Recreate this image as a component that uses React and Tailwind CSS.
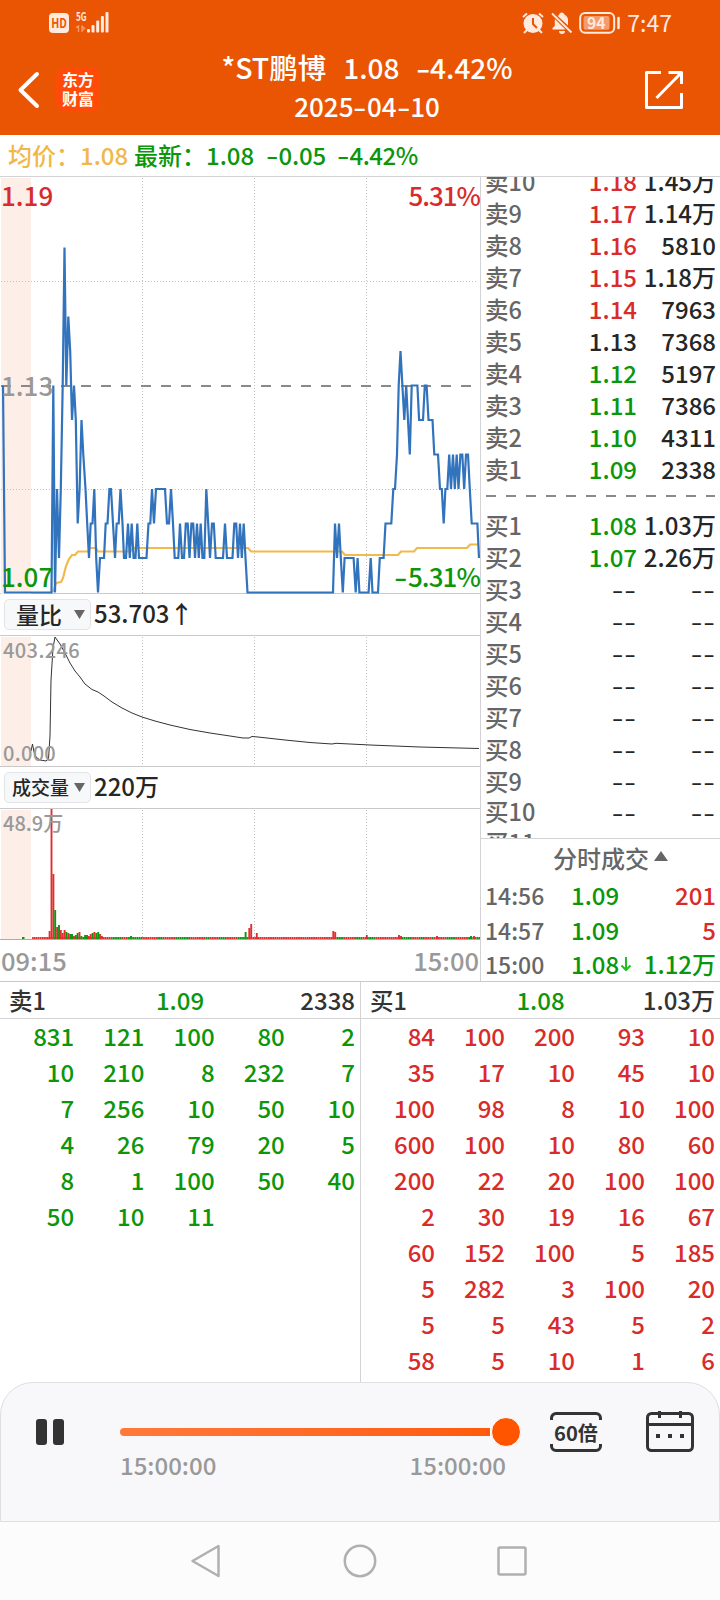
import React from 'react'
import clsx from 'clsx'

const asks = [
  ['卖10', '1.18', '1.45万', 'up'],
  ['卖9', '1.17', '1.14万', 'up'],
  ['卖8', '1.16', '5810', 'up'],
  ['卖7', '1.15', '1.18万', 'up'],
  ['卖6', '1.14', '7963', 'up'],
  ['卖5', '1.13', '7368', 'flat'],
  ['卖4', '1.12', '5197', 'down'],
  ['卖3', '1.11', '7386', 'down'],
  ['卖2', '1.10', '4311', 'down'],
  ['卖1', '1.09', '2338', 'down'],
]

const bids = [
  ['买1', '1.08', '1.03万', 'down'],
  ['买2', '1.07', '2.26万', 'down'],
  ['买3', '--', '--', 'flat'],
  ['买4', '--', '--', 'flat'],
  ['买5', '--', '--', 'flat'],
  ['买6', '--', '--', 'flat'],
  ['买7', '--', '--', 'flat'],
  ['买8', '--', '--', 'flat'],
  ['买9', '--', '--', 'flat'],
]

const sellQueue = [
  831, 121, 100, 80, 2,
  10, 210, 8, 232, 7,
  7, 256, 10, 50, 10,
  4, 26, 79, 20, 5,
  8, 1, 100, 50, 40,
  50, 10, 11,
]

const buyQueue = [
  84, 100, 200, 93, 10,
  35, 17, 10, 45, 10,
  100, 98, 8, 10, 100,
  600, 100, 10, 80, 60,
  200, 22, 20, 100, 100,
  2, 30, 19, 16, 67,
  60, 152, 100, 5, 185,
  5, 282, 3, 100, 20,
  5, 5, 43, 5, 2,
  58, 5, 10, 1, 6,
]

// [x, price in cents]
const price = [
  [3, 113], [5, 107], [51.5, 107], [53.3, 113], [55, 107], [57, 110], [59, 108], [60.8, 110], [62.7, 113], [64.5, 117],
  [66.3, 113], [68.3, 115], [70.2, 114], [72, 112], [74, 113], [75.8, 112], [77.7, 109], [79.6, 110], [81.5, 112],
  [83.3, 111], [85.5, 110], [87.2, 109], [89, 108], [90.7, 109], [92.5, 109], [94.3, 110], [96.2, 108], [98, 107],
  [100, 108], [104, 108], [105.7, 109], [107.5, 109], [109.4, 110], [111, 110], [113, 109], [115, 108], [116.7, 109],
  [118.7, 109], [120.5, 110], [122.5, 109], [124, 108], [126, 108], [128, 109], [129.8, 108], [131.7, 109], [133.6, 108],
  [135.5, 108], [137.3, 109], [139, 108], [146.5, 108], [148.5, 109], [150.3, 109], [152, 110], [154, 109], [156, 110],
  [165, 110], [167, 109], [169, 109], [171, 110], [173, 109], [174.7, 108], [178.3, 108], [180, 109], [182, 108],
  [184, 108], [185.8, 109], [187.7, 109], [189.5, 108], [191.4, 109], [193.2, 109], [195, 108], [197, 109], [198.8, 108],
  [200.7, 109], [202.5, 108], [204.3, 108], [206.3, 110], [208.2, 109], [210, 108], [212, 109], [213.8, 109], [215.7, 108],
  [223, 108], [225, 109], [227, 108], [232.5, 108], [234.3, 109], [236.2, 109], [238, 108], [240, 109], [241.8, 108],
  [243.7, 109], [245.5, 108], [247.5, 107], [333, 107], [335, 109], [337, 108], [339, 109], [340.8, 108], [342.8, 107],
  [344.6, 108], [353.6, 108], [355.7, 107], [357.6, 108], [359.4, 107], [368.6, 107], [370.7, 108], [372.5, 107],
  [378, 107], [379.8, 108], [383.6, 108], [385.5, 109], [391.3, 109], [393.3, 110], [395, 110], [397, 111], [398.7, 113],
  [400.5, 114], [402.4, 113], [404.3, 112], [406.2, 113], [408, 112], [409.8, 111], [411.7, 113], [417.4, 113],
  [419.1, 112], [423, 112], [424.8, 113], [426.6, 113], [428.5, 112], [432.5, 112], [434.3, 111], [438, 111], [440, 110],
  [441.8, 110], [443.7, 109], [445.4, 110], [447.3, 110], [449.2, 111], [451, 110], [453, 111], [454.8, 110],
  [456.7, 111], [458.5, 110], [460.4, 111], [462.3, 111], [464.2, 110], [466, 111], [468, 111], [469.8, 110],
  [471.7, 109], [477.4, 109], [479, 108],
]

const average = '53,415 56,406 61,405 63,401 66,389 69,382 72,378 75,378 78,374.5 88,374.5 90,371 96,371 98,374.5 130,374.5 134,371 248,371 251,374.5 342,374.5 345,378 398,378 401,374.5 414,374.5 417,371 467,371 470,367.5 478,367.5'

const ratio = '31,115 32.5,108 34,116 36,121 40,124 46,125 48.5,123 50,100 51,44 53,12 55,1 60,8 65,17 70,27 75,35 80,41 85,48 92,53.5 98,56 104,60 112,66 122,72 132,77 142,81 155,85 170,89 190,93.5 210,97 230,100 243,102 249,102 252,100.5 258,101 285,104 310,106.5 332,108 336,107.3 370,109 420,111 479,112.5'

// [x, height, rising]
const spikes = [
  [49.6, 8, 1], [51.5, 130, 1], [53.4, 65, 1], [55.2, 29, 0], [57.1, 12, 1], [59, 14, 0], [60.8, 9, 1], [62.7, 6, 1],
  [64.6, 9, 1], [66.4, 7, 0], [68.3, 6, 1], [70.2, 5, 0], [72, 5, 0], [73.9, 3, 1], [75.8, 4, 0], [77.6, 6, 0],
  [79.5, 7, 1], [81.4, 3, 0], [85.1, 4, 0], [87, 4, 0], [88.8, 3, 1], [90.7, 5, 1], [92.6, 6, 0], [94.4, 7, 1],
  [96.3, 6, 0], [98.2, 7, 0], [100, 5, 1], [101.9, 3, 1], [131, 3, 0], [245.6, 7, 0], [249.3, 11, 1], [251.2, 15, 1],
  [256.8, 6, 1], [333.3, 8, 1], [335.2, 7, 1], [366.8, 4, 1], [399, 4, 1], [401, 3, 1], [437, 3, 1], [471, 3, 0], [474, 3, 1],
]

// stretches of thin trading where the bars are mostly green
const greenRuns = [[83, 90], [112, 121], [128, 142], [158, 162], [175, 189], [205, 209], [218, 226], [238, 246], [337, 344], [355, 362], [369, 375], [402, 412], [420, 424], [431, 434], [447, 456], [468, 472], [477, 480]]

const tone = {
  up: 'text-[#d92b2b]',
  down: 'text-[#0b960b]',
  flat: 'text-[#262626]',
}

// hyphen drawn wide, like a minus sign
function Minus() {
  return (
    <span className="inline-block w-[0.52em] text-left">
      <span className="inline-block origin-left scale-x-[1.45]">-</span>
    </span>
  )
}

function Empty() {
  return <span className="inline-block origin-right scale-x-[1.4] font-normal tracking-[0.6px]">--</span>
}

function StatusBar() {
  return (
    <div className="flex h-[46px] items-center justify-between pl-[49px] pr-[48px] text-[#ffeae0]">
      <svg className="overflow-visible" width="62" height="24" viewBox="0 0 62 24" fill="currentColor">
        <rect x="0" y="2" width="20" height="20" rx="4" />
        <text x="2.2" y="17" fontSize="13" fontWeight="700" textLength="15.6" lengthAdjust="spacingAndGlyphs" fill="#ea5504">HD</text>
        <text x="27" y="9.5" fontSize="11.500" fontWeight="700" textLength="10.5" lengthAdjust="spacingAndGlyphs">5G</text>
        <path d="M27 16.500l2.500-1.500v6M33 14.500v6.500M33 15l2.500 2.500-2.500 2" fill="none" stroke="currentColor" strokeWidth="1.400" opacity="0.450" />
        <rect x="38" y="18" width="3" height="3.500" rx="1" />
        <rect x="42.500" y="14" width="3" height="7.500" rx="1" />
        <rect x="47.200" y="9.500" width="3" height="12" rx="1" />
        <rect x="51.900" y="5" width="3" height="16.500" rx="1" />
        <rect x="56.500" y="1" width="3" height="20.500" rx="1" />
      </svg>
      <div className="flex items-center">
        <svg width="22" height="22" viewBox="0 0 22 22" fill="none" stroke="currentColor" strokeWidth="2">
          <circle cx="11" cy="11.500" r="9.500" fill="currentColor" stroke="none" />
          <path d="M1 5l4-3.500M21 5l-4-3.500M2 21l3-3M20 21l-3-3" />
          <path d="M11 6v6l4 4" stroke="#ea5504" />
        </svg>
        <svg className="ml-[7px]" width="22" height="22" viewBox="0 0 22 22" fill="currentColor">
          <path d="M8 3.200A3 3 0 0 1 11 .5a3 3 0 0 1 2.600 2.200A6 6 0 0 1 17 8v5.500L6.500 3.800z" />
          <path d="M3.800 7L14.500 17.500H1.500V16l2.300-2zM8 19h6a3 3 0 0 1-6 0z" />
          <path d="M1 1.500L20.500 20.500" stroke="currentColor" strokeWidth="1.800" />
        </svg>
        <svg className="ml-[6px]" width="42" height="24" viewBox="0 0 42 24" fill="none" stroke="currentColor">
          <rect x="1.200" y="2" width="34" height="19.800" rx="5" strokeWidth="2" />
          <rect x="4.500" y="5" width="26" height="13.800" rx="2" fill="#f59b6b" stroke="none" />
          <path d="M39.500 7v10" strokeWidth="2.500" strokeLinecap="round" />
          <text x="8" y="17.500" fontSize="16" fontWeight="700" textLength="18.500" lengthAdjust="spacingAndGlyphs" fill="currentColor" stroke="none">94</text>
        </svg>
        <span className="ml-[6px] text-[23px] font-normal leading-6 -mt-[2px]">7:47</span>
      </div>
    </div>
  )
}

function Header() {
  return (
    <header className="h-[135px] bg-[#ea5504] text-white">
      <StatusBar />
      <div className="flex h-[89px] pl-[17px]">
        <svg className="mt-[25px]" width="24" height="38" viewBox="0 0 24 38" fill="none" stroke="currentColor" strokeWidth="4" strokeLinecap="round" strokeLinejoin="round">
          <path d="M20 3L3.500 19 20 35" />
        </svg>
        <div className="ml-[15px] mt-[21px] flex h-[45px] w-[44px] flex-col items-center justify-center rounded-[10px] bg-[#ff4a08] text-[16px] font-bold leading-[19px]">
          <span className="-mt-[2px]">东方</span>
          <span>财富</span>
        </div>
        <div className="ml-[67px] flex w-[400px] flex-col items-center">
          <div className="mt-[1px] flex text-[28px] leading-[40px]">
            <span className="text-[28.500px]">*ST鹏博</span>
            <span className="ml-[17px]">1.08</span>
            <span className="ml-[16px]"><Minus />4.42%</span>
          </div>
          <div className="mt-[1px] text-[26px] leading-[36px]">2025<Minus />04<Minus />10</div>
        </div>
        <svg className="ml-[77px] mt-[24px]" width="40" height="40" viewBox="0 0 40 40" fill="none" stroke="currentColor" strokeWidth="3" strokeLinejoin="round">
          <path d="M17 2.500H2.500v35h35V23M24.500 2.500h13V14M12.500 28L37 3" />
        </svg>
      </div>
    </header>
  )
}

function Summary() {
  return (
    <div className="flex h-[42px] border-b border-[#d3d3d6] pl-[8px] text-[24px] leading-[39px] text-[#0b960b]">
      <span className="w-[72px] text-[#f0b84a]">均价：</span>
      <span className="w-[54px] text-[#f0b84a]">1.08</span>
      <span className="w-[72px]">最新：</span>
      <span className="w-[60px]">1.08</span>
      <span className="w-[71px] tracking-[-0.2px]"><Minus />0.05</span>
      <span className="tracking-[-0.5px]"><Minus />4.42%</span>
    </div>
  )
}

function Grid({ height }) {
  return (
    <g>
      <rect x="1" y="1" width="30" height={height - 1} fill="#fdeee8" />
      <path d={`M142.5 1V${height}M254.5 1V${height}M366.5 1V${height}`} stroke="#c2c2c2" strokeDasharray="1 2" />
    </g>
  )
}

function PriceChart() {
  const line = price.map(([x, p]) => `${x},${208.5 + (113 - p) * 34.5}`).join(' ')
  return (
    <div className="relative h-[417px] border-b border-[#c9c9c9] text-[26px] leading-[30px]">
      <svg width="480" height="417" viewBox="0 0 480 417" fill="none">
        <Grid height={417} />
        <path d="M1 104.500H478M1 312.500H478" stroke="#c2c2c2" strokeDasharray="1 2" />
        <path d="M1 209H476" stroke="#8a8a8a" strokeWidth="2" strokeDasharray="10 10" />
        <polyline points={average} stroke="#f2b94b" strokeWidth="2.200" />
        <polyline points={line} stroke="#3273bd" strokeWidth="2.200" />
      </svg>
      <span className="absolute left-[1px] top-[3px] text-[#d92b2b]">1.19</span>
      <span className="absolute right-0 top-[3px] tracking-[-1px] text-[#d92b2b]">5.31%</span>
      <span className="absolute left-[1px] top-[193px] text-[#999]">1.13</span>
      <span className="absolute left-[1px] top-[384px] text-[#0b960b]">1.07</span>
      <span className="absolute right-0 top-[384px] tracking-[-0.9px] text-[#0b960b]"><Minus />5.31%</span>
    </div>
  )
}

function Indicator({ name, value, tight }) {
  return (
    <div className="flex h-[42px] items-center border-b border-[#c9c9c9] pl-[4px] text-[24px] text-[#262626]">
      <div className={clsx(
        'flex h-[31px] w-[87px] items-center justify-between rounded-[5px] border border-[#e3e4e8] bg-[#f7f8fa] pr-[5px]',
        tight ? 'pl-[7px] text-[19px]' : 'pl-[11px] text-[23px]'
      )}>
        <span className="leading-[28px] -mt-[2px]">{name}</span>
        <svg width="11" height="9" viewBox="0 0 11 9"><path d="M0 0h11L5.500 9z" fill="#666" /></svg>
      </div>
      <span className="ml-[3px] -mt-[3px] leading-[30px]">{value}</span>
    </div>
  )
}

function RatioChart() {
  return (
    <div className="relative h-[131px] border-b border-[#c9c9c9] text-[20px] leading-[24px] text-[#999]">
      <svg width="480" height="130" viewBox="0 0 480 130" fill="none">
        <Grid height={130} />
        <polyline points={ratio} stroke="#333" strokeWidth="1" />
      </svg>
      <span className="absolute left-[3px] top-[2px] tracking-[0.4px]">403.246</span>
      <span className="absolute left-[3px] top-[105px] tracking-[0.3px]">0.000</span>
    </div>
  )
}

function VolumeChart() {
  const ticks = []
  for (let x = 33; x < 480; x += 1.867) {
    const green = greenRuns.some(([a, b]) => x >= a && x <= b)
    ticks.push(<rect key={x} x={x - 0.9} y="128" width="1.7" height="2" fill={green ? '#0b960b' : '#e02f2f'} />)
  }
  return (
    <div className="relative h-[131px] border-b border-[#c9a0a0] text-[20px] leading-[24px] text-[#999]">
      <svg width="480" height="130" viewBox="0 0 480 130">
        <Grid height={130} />
        <rect x="22" y="128" width="2.500" height="2" fill="#0b960b" />
        {ticks}
        {spikes.map(([x, h, up]) => (
          <rect key={x} x={x - 0.95} y={130 - h} width="1.900" height={h} fill={up ? '#e02f2f' : '#0b960b'} />
        ))}
      </svg>
      <span className="absolute left-[3px] top-[2px]">48.9万</span>
    </div>
  )
}

function BookRow({ row, short }) {
  const [label, p, volume, dir] = row
  return (
    <div className={clsx('flex shrink-0 pl-[4px] pr-[4px] text-[24px]', short ? 'h-[29px] leading-[29px]' : 'h-8 leading-8')}>
      <span className="w-[72px] text-[23.500px] text-[#666]">{label}</span>
      <span className={clsx('w-[80px] text-right', tone[dir])}>{p === '--' ? <Empty /> : p}</span>
      <span className="flex-1 text-right text-[#262626]">{volume === '--' ? <Empty /> : volume}</span>
    </div>
  )
}

function OrderBook() {
  return (
    <div className="flex h-[662px] flex-col overflow-hidden border-b border-[#d3d3d6]">
      <div className="-mt-[12px]" />
      {asks.map(row => <BookRow key={row[0]} row={row} />)}
      <svg className="shrink-0" width="239" height="24" viewBox="0 0 239 24">
        <path d="M5 11H234" stroke="#8a8a8a" strokeWidth="2" strokeDasharray="10 10" />
      </svg>
      {bids.map(row => <BookRow key={row[0]} row={row} />)}
      <BookRow short row={['买10', '--', '--', 'flat']} />
      <BookRow row={['买11', '', '', 'flat']} />
    </div>
  )
}

function Trade({ time, price, volume, dir, arrow }) {
  return (
    <div className="flex h-[34.500px] items-center pl-[4px] pr-[4px] text-[24px] leading-[34px]">
      <span className="w-[86px] text-[23px] text-[#666]">{time}</span>
      <span className="text-[#0b960b]">{price}</span>
      {arrow && (
        <svg className="ml-px" width="12" height="16" viewBox="0 0 12 16" fill="none" stroke="#1fc01f" strokeWidth="2">
          <path d="M6 1v13M1.500 9.500L6 14l4.500-4.500" />
        </svg>
      )}
      <span className={clsx('flex-1 text-right', tone[dir])}>{volume}</span>
    </div>
  )
}

function Queue({ label, price, volume, items, color, className }) {
  return (
    <section className={clsx('h-[400px] w-[360px]', className)}>
      <div className="flex h-[37px] justify-between border-b border-[#d3d3d6] pl-[9px] pr-[5px] text-[24px] leading-[36px] text-[#333]">
        <span className="w-[100px] text-[23.500px]">{label}</span>
        <span className="w-[134px] pr-[4px] text-center text-[#0b960b]">{price}</span>
        <span className="w-[100px] text-right">{volume}</span>
      </div>
      <div className={clsx('-mt-px grid grid-cols-5 pl-[4px] pr-[5px] text-right text-[24px] leading-[36px]', color)}>
        {items.map((n, i) => <span key={i}>{n}</span>)}
      </div>
    </section>
  )
}

function Player() {
  return (
    <div className="h-[140px] bg-white">
      <div className="flex h-full rounded-t-[33px] border border-[#dfdfe1] bg-[#f8f8fa]">
        <svg className="ml-[35px] mt-[36px]" width="28" height="26" viewBox="0 0 28 26" fill="#333">
          <rect width="11" height="26" rx="3" />
          <rect x="17" width="11" height="26" rx="3" />
        </svg>
        <div className="ml-[56px] mt-[34px] w-[402px]">
          <div className="flex h-[30px] items-center">
            <div className="h-2 w-[370px] rounded-l-full bg-gradient-to-r from-[#ff7a3a] to-[#ff5a0a]" />
            <div className="ml-[1px] size-[30px] rounded-full border border-white bg-[#ff5500]" />
          </div>
          <div className="mt-[2px] flex w-[386px] justify-between text-[24px] leading-[32px] text-[#999]">
            <span>15:00:00</span>
            <span>15:00:00</span>
          </div>
        </div>
        <svg className="ml-[28px] mt-[29px]" width="52" height="40" viewBox="0 0 52 40" fill="none" stroke="#333" strokeWidth="3">
          <path d="M1.500 8V6A4.500 4.500 0 0 1 6 1.500H46A4.500 4.500 0 0 1 50.500 6V8M1.500 32v2A4.500 4.500 0 0 0 6 38.500H46A4.500 4.500 0 0 0 50.500 34V32" />
          <text x="4" y="28.500" fontSize="20" fontWeight="700" textLength="44" lengthAdjust="spacingAndGlyphs" fill="#333" stroke="none">60倍</text>
        </svg>
        <svg className="ml-[44px] mt-[27px]" width="48" height="42" viewBox="0 0 48 42" fill="none" stroke="#333" strokeWidth="3">
          <rect x="1.500" y="3.500" width="45" height="37" rx="4" />
          <path d="M1.500 14.500h45M13.500 1v7M34.500 1v7" />
          <path d="M10 26h4M22 26h4M34 26h4" strokeWidth="4" />
        </svg>
      </div>
    </div>
  )
}

function NavBar() {
  return (
    <nav className="flex h-[78px] items-center bg-[#fcfcfc] pl-[190px]">
      <svg width="32" height="34" viewBox="0 0 32 34" fill="none" stroke="#b0b0b0" strokeWidth="2.500" strokeLinejoin="round">
        <path d="M28.500 2v30L2.500 17z" />
      </svg>
      <svg className="ml-[121px]" width="34" height="34" viewBox="0 0 34 34" fill="none" stroke="#b0b0b0" strokeWidth="2.500">
        <circle cx="17" cy="17" r="15.200" />
      </svg>
      <svg className="ml-[120px]" width="30" height="30" viewBox="0 0 30 30" fill="none" stroke="#b0b0b0" strokeWidth="2.500">
        <rect x="1.500" y="1.500" width="27" height="27" rx="1.500" />
      </svg>
    </nav>
  )
}

export default function App() {
  return (
    <div className="h-[1600px] w-[720px] overflow-hidden bg-white font-['Noto_Sans_CJK_SC',sans-serif] font-medium">
      <Header />
      <Summary />
      <main className="flex h-[805px] border-b border-[#c9c9c9]">
        <div className="w-[480px]">
          <PriceChart />
          <Indicator name="量比" value="53.703↑" />
          <RatioChart />
          <Indicator tight name="成交量" value="220万" />
          <VolumeChart />
          <div className="flex justify-between pl-[1px] pr-[1px] text-[25.500px] leading-[40px] text-[#999]">
            <span>09:15</span>
            <span>15:00</span>
          </div>
        </div>
        <aside className="w-[240px] border-l border-[#d3d3d6]">
          <OrderBook />
          <div className="flex h-[39px] items-center pl-[72px] text-[24px] leading-[36px] text-[#666]">
            <span className="-mt-[2px]">分时成交</span>
            <svg className="ml-[5px] -mt-[5px]" width="14" height="10" viewBox="0 0 14 10"><path d="M0 10h14L7 0z" fill="#666" /></svg>
          </div>
          <Trade time="14:56" price="1.09" volume="201" dir="up" />
          <Trade time="14:57" price="1.09" volume="5" dir="up" />
          <Trade time="15:00" price="1.08" volume="1.12万" dir="down" arrow />
        </aside>
      </main>
      <div className="flex">
        <Queue label="卖1" price="1.09" volume="2338" items={sellQueue} color="text-[#0b960b]" />
        <Queue className="border-l border-[#d3d3d6]" label="买1" price="1.08" volume="1.03万" items={buyQueue} color="text-[#d92b2b]" />
      </div>
      <Player />
      <NavBar />
    </div>
  )
}
